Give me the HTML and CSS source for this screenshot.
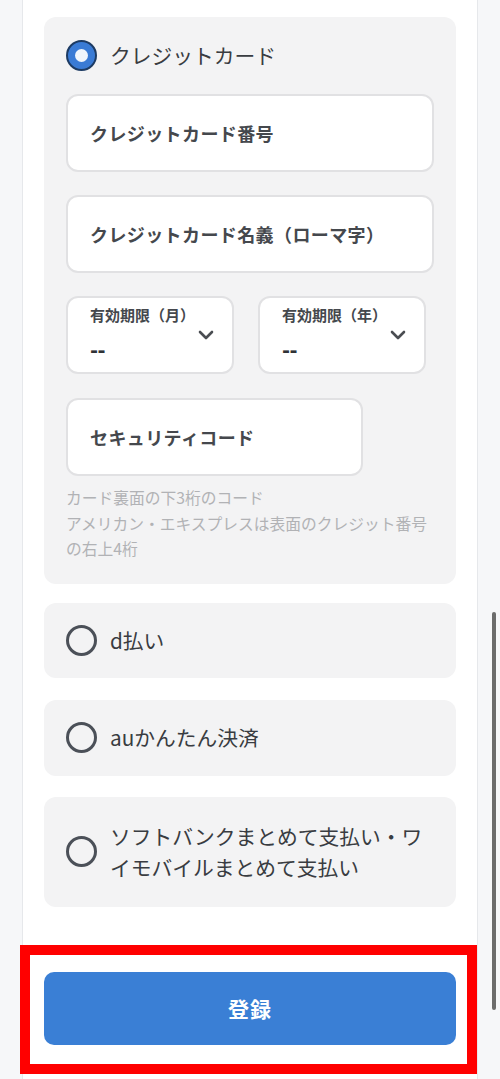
FILE: index.html
```html
<!DOCTYPE html>
<html lang="ja">
<head>
<meta charset="utf-8">
<link rel="stylesheet" href="styles.css">
</head>
<body>
<div class="page">
  <section class="card card-main">
    <div class="option">
      <span class="radio checked"></span>
      <span class="option-label">クレジットカード</span>
    </div>
    <div class="field">クレジットカード番号</div>
    <div class="field">クレジットカード名義（ローマ字）</div>
    <div class="select-row">
      <div class="select">
        <div class="select-text">
          <div class="select-label">有効期限（月）</div>
          <div class="select-value">--</div>
        </div>
        <svg class="chevron" width="16" height="10" viewBox="0 0 16 10"><polyline points="2,2 8,8 14,2" fill="none" stroke="#4a4d52" stroke-width="2.6" stroke-linecap="round" stroke-linejoin="round"/></svg>
      </div>
      <div class="select">
        <div class="select-text">
          <div class="select-label">有効期限（年）</div>
          <div class="select-value">--</div>
        </div>
        <svg class="chevron" width="16" height="10" viewBox="0 0 16 10"><polyline points="2,2 8,8 14,2" fill="none" stroke="#4a4d52" stroke-width="2.6" stroke-linecap="round" stroke-linejoin="round"/></svg>
      </div>
    </div>
    <div class="field field-short">セキュリティコード</div>
    <p class="help">カード裏面の下3桁のコード<br>アメリカン・エキスプレスは表面のクレジット番号の右上4桁</p>
  </section>

  <section class="card card-option card-d">
    <div class="option">
      <span class="radio"></span>
      <span class="option-label">d払い</span>
    </div>
  </section>

  <section class="card card-option card-au">
    <div class="option">
      <span class="radio"></span>
      <span class="option-label">auかんたん決済</span>
    </div>
  </section>

  <section class="card card-option card-sb">
    <div class="option">
      <span class="radio"></span>
      <span class="option-label multi">ソフトバンクまとめて支払い・ワイモバイルまとめて支払い</span>
    </div>
  </section>

  <div class="footer">
    <div class="btn-wrap">
      <button class="submit" type="button">登録</button>
      <div class="highlight"></div>
    </div>
  </div>
</div>
<div class="scrollbar"></div>
</body>
</html>
```

FILE: styles.css
```css
html, body {
  margin: 0;
  padding: 0;
}
body {
  background: #f6f7f9;
  font-family: "Noto Sans CJK JP", "Noto Sans", sans-serif;
  color: #3a3d42;
}
.page {
  margin: 0 22px;
  background: #ffffff;
  border-left: 1px solid #e6e8eb;
  border-right: 1px solid #e6e8eb;
  padding: 17px 21px 35px;
}
.card {
  background: #f3f3f4;
  border-radius: 12px;
}
.card-main {
  padding: 23px 22px 22px;
  margin-bottom: 19px;
  display: flex;
  flex-direction: column;
  gap: 23px;
}
.card-option {
  padding: 0 22px;
  display: flex;
  align-items: center;
}
.card-d { height: 75px; margin-bottom: 22px; }
.card-au { height: 76px; margin-bottom: 21px; }
.card-sb { height: 110px; }

.option {
  display: flex;
  align-items: center;
  gap: 13px;
}
.option-label {
  font-size: 20.75px;
  line-height: 31px;
  color: #393c41;
}
.option-label.multi {
  width: 324px;
}
.radio {
  flex: none;
  width: 31px;
  height: 31px;
  box-sizing: border-box;
  border-radius: 50%;
  border: 3px solid #4b5058;
  position: relative;
}
.radio.checked {
  border: 2.5px solid #1d3b63;
  background: #3a7bd5;
}
.radio.checked::after {
  content: "";
  position: absolute;
  left: 50%;
  top: 50%;
  width: 13px;
  height: 13px;
  margin: -6.5px 0 0 -6.5px;
  border-radius: 50%;
  background: #f1f6fc;
}

.field {
  height: 78px;
  box-sizing: border-box;
  background: #ffffff;
  border: 2px solid #e1e1e3;
  border-radius: 12px;
  padding: 0 22px;
  display: flex;
  align-items: center;
  font-size: 18px;
  font-weight: 700;
  letter-spacing: 0.4px;
  color: #45484d;
}
.field-short {
  width: 297px;
  margin-top: 1px;
}
.select-row {
  display: grid;
  grid-template-columns: 168px 168px;
  column-gap: 24px;
}
.select {
  height: 78px;
  box-sizing: border-box;
  background: #ffffff;
  border: 2px solid #e1e1e3;
  border-radius: 12px;
  padding: 7px 18px 10px 22px;
  display: flex;
  align-items: center;
  justify-content: space-between;
}
.select-text {
  display: flex;
  flex-direction: column;
  align-self: flex-start;
}
.select-label {
  font-size: 15px;
  line-height: 20px;
  font-weight: 700;
  color: #45484d;
}
.select-value {
  margin-top: 12px;
  font-size: 21px;
  line-height: 24px;
  font-weight: 900;
  letter-spacing: -0.5px;
  color: #2f3236;
}
.chevron {
  display: block;
  margin-top: 2px;
}
.help {
  margin: -14px 0 0;
  font-size: 15.75px;
  line-height: 25.5px;
  color: #b1b2b5;
}

.footer {
  padding-top: 65px;
}
.btn-wrap {
  position: relative;
}
.submit {
  display: block;
  width: 100%;
  height: 73px;
  border: none;
  border-radius: 10px;
  background: #3a7fd5;
  color: #ffffff;
  font-family: "Noto Sans CJK JP", "Noto Sans", sans-serif;
  font-size: 21px;
  font-weight: 700;
  letter-spacing: 1px;
}
.highlight {
  position: absolute;
  top: -27px;
  left: -24px;
  right: -21px;
  bottom: -29px;
  border: 10px solid #ff0000;
  pointer-events: none;
}
.scrollbar {
  position: fixed;
  top: 612px;
  right: 4px;
  width: 4px;
  height: 398px;
  border-radius: 2px;
  background: #6c6c6c;
}
```
